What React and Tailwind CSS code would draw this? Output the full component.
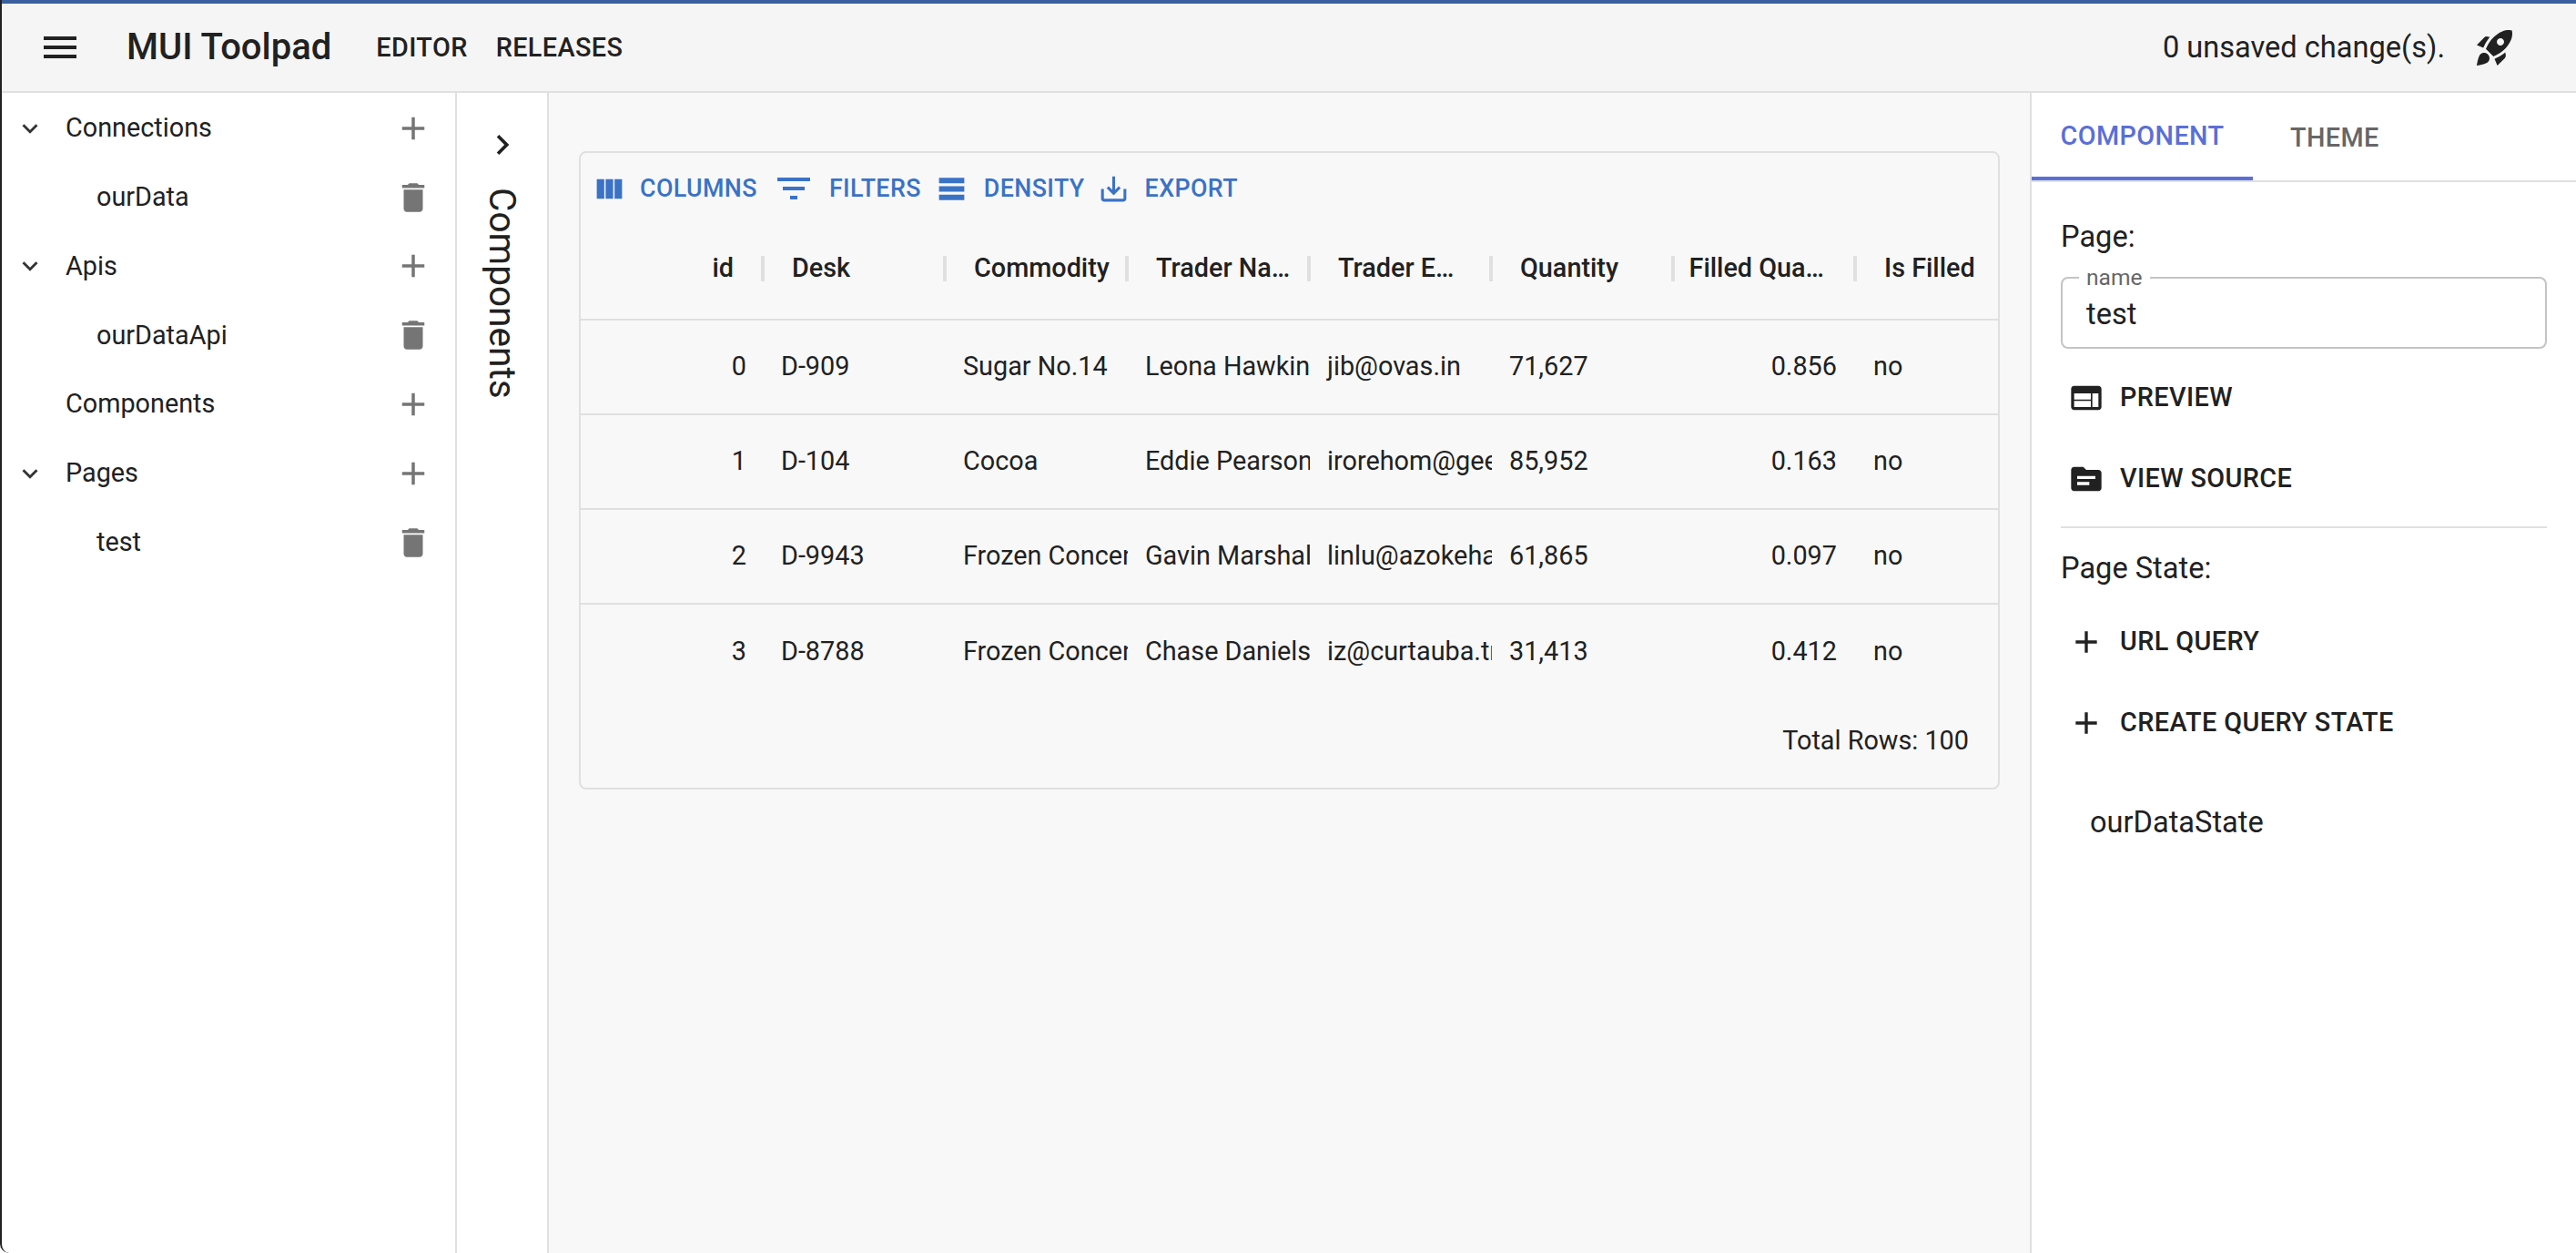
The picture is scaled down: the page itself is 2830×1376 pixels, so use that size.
import React from "react";

const paths = {
  menu: "M3 18h18v-2H3v2zm0-5h18v-2H3v2zm0-7v2h18V6H3z",
  expand: "M16.59 8.59 12 13.17 7.41 8.59 6 10l6 6 6-6z",
  add: "M19 13h-6v6h-2v-6H5v-2h6V5h2v6h6v2z",
  trash: "M6 19c0 1.1.9 2 2 2h8c1.1 0 2-.9 2-2V7H6v12zM19 4h-3.5l-1-1h-5l-1 1H5v2h14V4z",
  chevron: "M10 6 8.59 7.41 13.17 12l-4.58 4.59L10 18l6-6z",
  rocket:
    "M9.19 6.35c-2.04 2.29-3.44 5.58-3.57 5.89L2 10.69l4.05-4.05c.47-.47 1.15-.68 1.81-.55l1.33.26zM11.17 17s3.74-1.55 5.89-3.7c5.4-5.4 4.5-9.62 4.21-10.57-.95-.3-5.17-1.19-10.57 4.21C8.55 9.09 7 12.83 7 12.83L11.17 17zm6.48-2.19c-2.29 2.04-5.58 3.44-5.89 3.57L13.31 22l4.05-4.05c.47-.47.68-1.15.55-1.81l-.26-1.33zM9 18c0 .83-.34 1.58-.88 2.12C6.94 21.3 2 22 2 22s.7-4.94 1.88-6.12C4.42 15.34 5.17 15 6 15c1.66 0 3 1.34 3 3zm4-9c0-1.1.9-2 2-2s2 .9 2 2-.9 2-2 2-2-.9-2-2z",
  columns: "M14.67 5v14H9.33V5h5.34zm1 14H21V5h-5.33v14zm-7.34 0V5H3v14h5.33z",
  filter: "M10 18h4v-2h-4v2zM3 6v2h18V6H3zm3 7h12v-2H6v2z",
  density: "M21 8H3V4h18v4zm0 2H3v4h18v-4zm0 6H3v4h18v-4z",
  export:
    "M19 12v7H5v-7H3v7c0 1.1.9 2 2 2h14c1.1 0 2-.9 2-2v-7h-2zm-6 .67l2.59-2.58L17 11.5l-5 5-5-5 1.41-1.41L11 12.67V3h2z",
  web: "M20 4H4c-1.1 0-1.99.9-1.99 2L2 18c0 1.1.9 2 2 2h16c1.1 0 2-.9 2-2V6c0-1.1-.9-2-2-2zm-5 14H4v-4h11v4zm0-5H4V9h11v4zm5 5h-4V9h4v9z",
  source:
    "M20 6h-8l-2-2H4c-1.1 0-1.99.9-1.99 2L2 18c0 1.1.9 2 2 2h16c1.1 0 2-.9 2-2V8c0-1.1-.9-2-2-2zm-6 10H6v-2h8v2zm4-4H6v-2h12v2z",
};

const Icon = ({ name, className }) => (
  <svg viewBox="0 0 24 24" fill="currentColor" className={className}>
    <path d={paths[name]} />
  </svg>
);

const tree = [
  { label: "Connections", open: true },
  { label: "ourData", child: true },
  { label: "Apis", open: true },
  { label: "ourDataApi", child: true },
  { label: "Components" },
  { label: "Pages", open: true },
  { label: "test", child: true },
];

const columns = [
  { title: "id", head: "flex-1 text-right pr-[30px] whitespace-nowrap", cell: "flex items-center justify-end pr-[19px] overflow-hidden whitespace-nowrap" },
  { title: "Desk" },
  { title: "Commodity" },
  { title: "Trader Na…" },
  { title: "Trader E…" },
  { title: "Quantity" },
  { title: "Filled Qua…", head: "flex-1 text-right pr-[32px] whitespace-nowrap", cell: "flex items-center justify-end pr-[21px] overflow-hidden whitespace-nowrap" },
  { title: "Is Filled" },
];

const rows = [
  ["0", "D-909", "Sugar No.14", "Leona Hawkins", "jib@ovas.in", "71,627", "0.856", "no"],
  ["1", "D-104", "Cocoa", "Eddie Pearson", "irorehom@geeviw.gov", "85,952", "0.163", "no"],
  ["2", "D-9943", "Frozen Concentrated Orange Juice", "Gavin Marshall", "linlu@azokeha.sb", "61,865", "0.097", "no"],
  ["3", "D-8788", "Frozen Concentrated Orange Juice", "Chase Daniels", "iz@curtauba.tn", "31,413", "0.412", "no"],
];

const toolbar = [
  { label: "COLUMNS", icon: "columns", size: "w-[37px] h-[37px]", gap: "mr-[15px]", after: "mr-[16px]" },
  { label: "FILTERS", icon: "filter", size: "w-[48px] h-[48px]", gap: "mr-[15px]", after: "mr-[15px]" },
  { label: "DENSITY", icon: "density", size: "w-[37px] h-[37px]", gap: "mr-[17px]", after: "mr-[13px]" },
  { label: "EXPORT", icon: "export", size: "w-[37px] h-[37px]", gap: "mr-[16px]", after: "" },
];

const SideButton = ({ icon, label }) => (
  <div className="flex items-center h-full">
    <div className="w-[65px] flex justify-center pr-[9px]">
      <Icon name={icon} className="w-[40px] h-[40px] text-[#212121]" />
    </div>
    <span className="text-[28.8px] font-medium text-[#212121] tracking-[0.4px]">{label}</span>
  </div>
);

export default function App() {
  return (
    <div className="h-screen w-screen overflow-hidden flex flex-col bg-white border-l-2 border-[#222] rounded-bl-[10px] text-[#212121] [font-family:Roboto,sans-serif]">
      <header className="h-[102px] shrink-0 flex items-center bg-[#f5f5f5] border-t-4 border-t-[#3a5f9e] border-b-2 border-b-[#e0e0e0]">
        <Icon name="menu" className="ml-[40px] w-[48px] h-[48px]" />
        <h1 className="ml-[49px] text-[40px] font-medium leading-none">MUI Toolpad</h1>
        <nav className="ml-[49px] pt-[2px] flex gap-[31px] text-[28.8px] font-medium tracking-[0.4px]">
          <span>EDITOR</span>
          <span>RELEASES</span>
        </nav>
        <span className="ml-auto text-[32.6px]">0 unsaved change(s).</span>
        <Icon name="rocket" className="ml-[31px] mr-[65px] w-[48px] h-[48px]" />
      </header>

      <div className="flex-1 flex min-h-0">
        <aside className="w-[500px] shrink-0 pt-[1px] border-r-2 border-[#e0e0e0]">
          {tree.map((item) => (
            <div key={item.label} className="h-[75.8px] flex items-center">
              <div className="w-[62px] flex justify-center">
                {item.open && <Icon name="expand" className="w-[34px] h-[34px] text-[#333]" />}
              </div>
              <span className={item.child ? "ml-[42px] text-[28.8px]" : "ml-[8px] text-[28.8px]"}>{item.label}</span>
              <Icon
                name={item.child ? "trash" : "add"}
                className="ml-auto mr-[25px] w-[42px] h-[42px] text-[#757575]"
              />
            </div>
          ))}
        </aside>

        <div className="w-[101px] shrink-0 border-r-2 border-[#e0e0e0] flex flex-col items-center pt-[35px]">
          <Icon name="chevron" className="w-[44px] h-[44px] text-[#212121]" />
          <span className="mt-[25px] text-[40.6px] leading-none [writing-mode:vertical-rl]">Components</span>
        </div>

        <main className="flex-1 min-w-0 bg-[#f8f8f8] px-[33px] pt-[64px]">
          <div className="border-2 border-[#e0e0e0] rounded-[8px] overflow-hidden">
            <div className="h-[78px] flex items-center pl-[13px] text-[26.8px] font-medium text-[#3a72c6] tracking-[0.4px]">
              {toolbar.map((t) => (
                <div key={t.label} className={`flex items-center ${t.after}`}>
                  <Icon name={t.icon} className={`${t.size} ${t.gap}`} />
                  <span>{t.label}</span>
                </div>
              ))}
            </div>

            <div className="w-[1600px] pl-[1px] grid grid-cols-[repeat(8,200px)] h-[106px] pb-[7px] border-b-2 border-[#e0e0e0] text-[28.8px] font-medium">
              {columns.map((col) => (
                <div key={col.title} className="flex items-center">
                  <span className={col.head || "flex-1 pl-[31px] whitespace-nowrap"}>{col.title}</span>
                  <span className="w-[4px] h-[28px] bg-[#e0e0e0] mr-[-1px]" />
                </div>
              ))}
            </div>

            {rows.map((row, i) => (
              <div
                key={row[0]}
                className={
                  i < rows.length - 1
                    ? "w-[1600px] pl-[1px] grid grid-cols-[repeat(8,200px)] h-[104px] border-b-2 border-[#e0e0e0] text-[28.8px]"
                    : "w-[1600px] pl-[1px] grid grid-cols-[repeat(8,200px)] h-[104px] text-[28.8px]"
                }
              >
                {row.map((cell, j) => (
                  <div
                    key={j}
                    className={columns[j].cell || "flex items-center pl-[19px] overflow-hidden whitespace-nowrap"}
                  >
                    {cell}
                  </div>
                ))}
              </div>
            ))}

            <div className="h-[97px] pb-[5px] pr-[32px] flex items-center justify-end text-[28.8px]">
              Total Rows: 100
            </div>
          </div>
        </main>

        <aside className="w-[600px] shrink-0 border-l-2 border-[#e0e0e0] flex flex-col">
          <div className="h-[98px] shrink-0 flex border-b-2 border-[#e0e0e0] text-[28.8px] font-medium tracking-[0.4px]">
            <div className="w-[243px] flex items-center justify-center pt-[4px] text-[#5a6fd6] border-b-4 border-[#5a6fd6]">
              COMPONENT
            </div>
            <div className="ml-[41px] flex items-center pt-[4px] text-[#666]">THEME</div>
          </div>

          <div className="px-[32px] flex flex-col">
            <div className="h-[120px] flex items-center text-[32.6px]">Page:</div>
            <div className="relative h-[79px] mt-[-16px] border-2 border-[#c4c4c4] rounded-[8px] flex items-center pl-[26px] pt-[4px] text-[32.6px]">
              test
              <span className="absolute left-[18px] top-[-13px] px-[8px] bg-white text-[24.6px] leading-[24px] text-[#666]">
                name
              </span>
            </div>
            <div className="h-[89px] mt-[9px]">
              <SideButton icon="web" label="PREVIEW" />
            </div>
            <div className="h-[89px]">
              <SideButton icon="source" label="VIEW SOURCE" />
            </div>
            <div className="h-[2px] bg-[#e0e0e0] mt-[8px]" />
            <div className="h-[80px] pt-[8px] flex items-center text-[32.6px]">Page State:</div>
            <div className="h-[89px]">
              <SideButton icon="add" label="URL QUERY" />
            </div>
            <div className="h-[89px]">
              <SideButton icon="add" label="CREATE QUERY STATE" />
            </div>
            <div className="h-[130px] flex items-center pl-[32px] text-[32.6px]">ourDataState</div>
          </div>
        </aside>
      </div>
    </div>
  );
}
